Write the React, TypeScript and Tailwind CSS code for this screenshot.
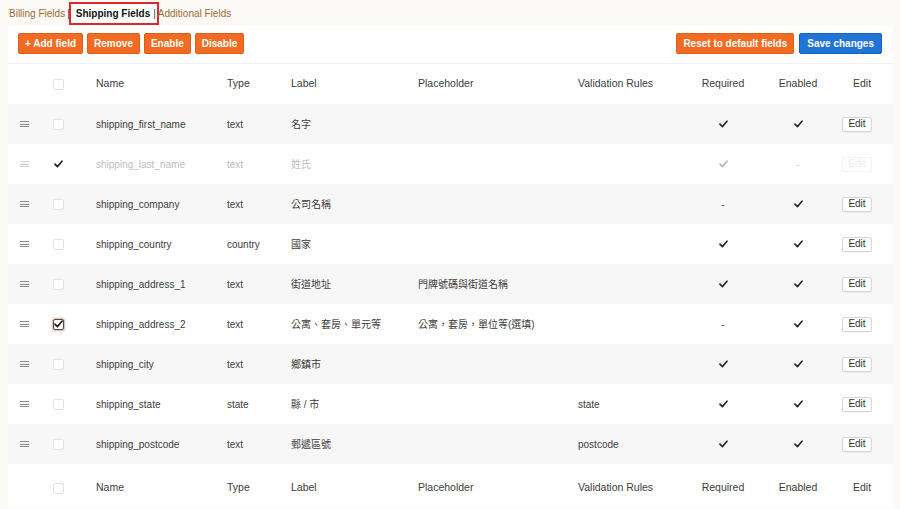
import React from "react";

type Row = {
  name: string;
  type: string;
  label: string;
  placeholder: string;
  rules: string;
  required: boolean;
  enabled: boolean;
  checked?: boolean;
  focus?: boolean;
  disabled?: boolean;
};

const rows: Row[] = [
  { name: "shipping_first_name", type: "text", label: "名字", placeholder: "", rules: "", required: true, enabled: true },
  { name: "shipping_last_name", type: "text", label: "姓氏", placeholder: "", rules: "", required: true, enabled: false, checked: true, disabled: true },
  { name: "shipping_company", type: "text", label: "公司名稱", placeholder: "", rules: "", required: false, enabled: true },
  { name: "shipping_country", type: "country", label: "國家", placeholder: "", rules: "", required: true, enabled: true },
  { name: "shipping_address_1", type: "text", label: "街道地址", placeholder: "門牌號碼與街道名稱", rules: "", required: true, enabled: true },
  { name: "shipping_address_2", type: "text", label: "公寓、套房、單元等", placeholder: "公寓，套房，單位等(選填)", rules: "", required: false, enabled: true, checked: true, focus: true },
  { name: "shipping_city", type: "text", label: "鄉鎮市", placeholder: "", rules: "", required: true, enabled: true },
  { name: "shipping_state", type: "state", label: "縣 / 市", placeholder: "", rules: "state", required: true, enabled: true },
  { name: "shipping_postcode", type: "text", label: "郵遞區號", placeholder: "", rules: "postcode", required: true, enabled: true },
];

const font = { fontFamily: '"Liberation Sans", "Noto Sans CJK TC", Arial, sans-serif' };

function Check({ className }: { className?: string }) {
  return (
    <svg width="9" height="8" viewBox="0 0 9 8" className={className}>
      <path d="M1 4.2 L3.4 6.6 L8 1.2" fill="none" stroke="currentColor" strokeWidth="1.7" strokeLinecap="round" strokeLinejoin="round" />
    </svg>
  );
}

function Drag({ faded }: { faded?: boolean }) {
  return (
    <div className={`flex flex-col gap-[1.5px] w-[9px] ${faded ? "opacity-40" : ""}`}>
      <div className="h-px bg-[#8a8a8a]" />
      <div className="h-px bg-[#8a8a8a]" />
      <div className="h-px bg-[#8a8a8a]" />
    </div>
  );
}

function Box({ checked, focus }: { checked?: boolean; focus?: boolean }) {
  if (checked && !focus) {
    return (
      <div className="w-[11px] h-[11px] rounded-[2px] flex items-center justify-center bg-white">
        <Check className="text-[#222]" />
      </div>
    );
  }
  return (
    <div
      className={`w-[11px] h-[11px] rounded-[2px] bg-white flex items-center justify-center border ${
        focus ? "border-[#5a4a3a] shadow-[0_0_2px_1px_rgba(140,100,60,0.45)]" : "border-[#e3e3e3]"
      }`}
    >
      {checked && <Check className="text-[#222]" />}
    </div>
  );
}

function HeaderRow() {
  return (
    <div className="flex items-center h-[40px] text-[10.5px] text-[#3c3c3c] bg-white">
      <div className="w-[45px]" />
      <div className="w-[43px] flex"><Box /></div>
      <div className="w-[131px]">Name</div>
      <div className="w-[64px]">Type</div>
      <div className="w-[127px]">Label</div>
      <div className="w-[160px]">Placeholder</div>
      <div className="w-[110px]">Validation Rules</div>
      <div className="w-[70px] text-center">Required</div>
      <div className="w-[80px] text-center">Enabled</div>
      <div className="w-[48px] text-center">Edit</div>
    </div>
  );
}

function DataRow({ r, i }: { r: Row; i: number }) {
  const stripe = i % 2 === 0 ? "bg-[#f7f7f7]" : "bg-white";
  const txt = r.disabled ? "text-[#bdbdbd]" : "text-[#3c3c3c]";
  const mark = r.disabled ? "text-[#b5b5b5]" : "text-[#2a2a2a]";
  return (
    <div className={`flex items-center h-[40px] text-[10px] ${stripe} ${txt}`}>
      <div className="w-[45px] pl-[12px]"><Drag faded={r.disabled} /></div>
      <div className="w-[43px] flex"><Box checked={r.checked} focus={r.focus} /></div>
      <div className="w-[131px]">{r.name}</div>
      <div className="w-[64px]">{r.type}</div>
      <div className="w-[127px]">{r.label}</div>
      <div className="w-[160px]">{r.placeholder}</div>
      <div className="w-[110px]">{r.rules}</div>
      <div className="w-[70px] flex justify-center">
        {r.required ? <Check className={mark} /> : <span>-</span>}
      </div>
      <div className="w-[80px] flex justify-center">
        {r.enabled ? <Check className={mark} /> : <span className="text-[#d0d0d0]">-</span>}
      </div>
      <div className="w-[38px] flex justify-center">
        <button
          className={`h-[15px] px-[5px] text-[10px] leading-none rounded-[2px] border bg-white ${
            r.disabled ? "border-[#f3f3f3] text-[#eeeeee]" : "border-[#d6d6d6] text-[#333] shadow-[0_1px_0_rgba(0,0,0,0.04)]"
          }`}
        >
          Edit
        </button>
      </div>
    </div>
  );
}

function OrangeBtn({ children }: { children: React.ReactNode }) {
  return (
    <button className="h-[21px] px-[6px] rounded-[2px] bg-[#f26b22] border border-[#e05e18] text-white font-bold text-[10px] leading-none">
      {children}
    </button>
  );
}

export default function App() {
  return (
    <div className="w-[900px] h-[509px] bg-[#fcfaf6] overflow-hidden" style={font}>
      <div className="flex items-center h-[26px] pl-[9px] text-[10px] text-[#9b6b2e]">
        <span>Billing Fields</span>
        <span className="ml-[2px] text-[#444]">|</span>
        <span className="ml-[-1px] mt-[1px] h-[23px] pl-[5px] pr-[1px] flex items-center border-2 border-[#e0262b] bg-white text-[#111]">
          <span className="font-bold">Shipping Fields</span>
          <span className="ml-[3px] text-[#444]">|</span>
        </span>
        <span className="ml-[-1px]">Additional Fields</span>
      </div>
      <div className="ml-[8px] w-[885px] bg-white">
        <div className="flex items-start justify-between h-[38px] pt-[7px] pl-[10px] pr-[11px] border-b border-[#f0f0f0]">
          <div className="flex gap-[4px]">
            <OrangeBtn>+ Add field</OrangeBtn>
            <OrangeBtn>Remove</OrangeBtn>
            <OrangeBtn>Enable</OrangeBtn>
            <OrangeBtn>Disable</OrangeBtn>
          </div>
          <div className="flex gap-[5px]">
            <OrangeBtn>Reset to default fields</OrangeBtn>
            <button className="h-[21px] px-[7px] rounded-[2px] bg-[#1f74d6] border border-[#1764c0] text-white font-bold text-[10px] leading-none">
              Save changes
            </button>
          </div>
        </div>
        <HeaderRow />
        {rows.map((r, i) => (
          <DataRow key={r.name} r={r} i={i} />
        ))}
        <div className="mt-[4px]">
          <HeaderRow />
        </div>
      </div>
    </div>
  );
}
